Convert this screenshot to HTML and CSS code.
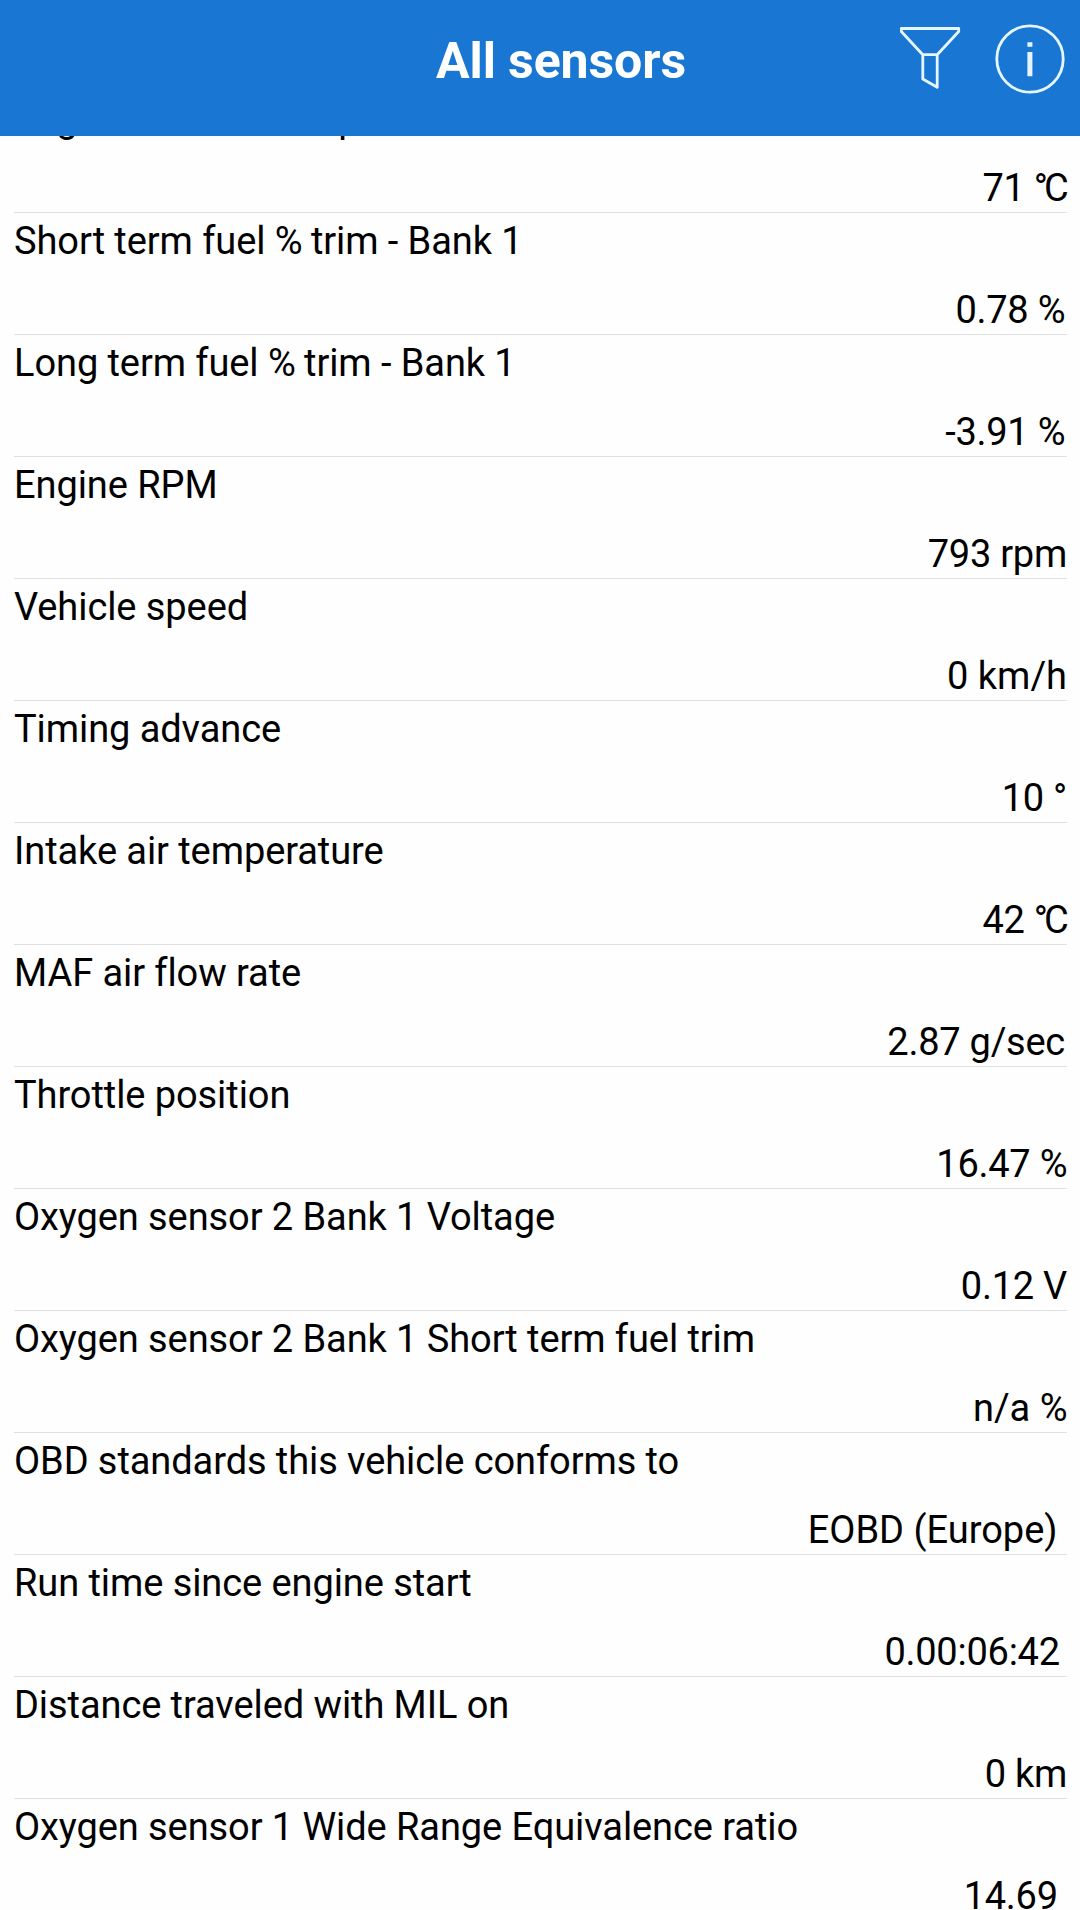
FILE: index.html
```html
<!DOCTYPE html>
<html lang="en">
<head>
<meta charset="utf-8">
<title>All sensors</title>
<link rel="stylesheet" href="styles.css">
</head>
<body>
<div class="screen">
<header class="bar">
<h1 class="title">All sensors</h1>
<div class="actions">
<svg class="filter" viewBox="0 0 62 66" width="62" height="66"><path d="M1.3 2.5H58.7V5.5L37.2 28.7H22.8L1.3 5.5ZM22.8 28.7V53L37.2 61.3V28.7"/></svg>
<svg class="info" viewBox="0 0 70 70" width="70" height="70"><circle cx="35" cy="35" r="33.2"/><path class="solid" d="M32.4 18.2h5v4.6h-5zM32.4 28h5v24.3h-5z"/></svg>
</div>
</header>
<main class="list">
<section class="row"><div class="name">Engine coolant temperature</div><div class="value celsius">71 <span class="deg">°</span>C</div></section>
<section class="row"><div class="name">Short term fuel <span class="pct">%</span> trim - Bank 1</div><div class="value inset">0.78 <span class="pct">%</span></div></section>
<section class="row"><div class="name">Long term fuel <span class="pct">%</span> trim - Bank 1</div><div class="value inset">-3.91 <span class="pct">%</span></div></section>
<section class="row"><div class="name">Engine RPM</div><div class="value">793 rpm</div></section>
<section class="row"><div class="name">Vehicle speed</div><div class="value plain">0 km/h</div></section>
<section class="row"><div class="name">Timing advance</div><div class="value">10 °</div></section>
<section class="row"><div class="name">Intake air temperature</div><div class="value celsius">42 <span class="deg">°</span>C</div></section>
<section class="row"><div class="name">MAF air flow rate</div><div class="value inset">2.87 g/sec</div></section>
<section class="row"><div class="name">Throttle position</div><div class="value">16.47 <span class="pct">%</span></div></section>
<section class="row"><div class="name">Oxygen sensor 2 Bank 1 Voltage</div><div class="value">0.12 V</div></section>
<section class="row"><div class="name">Oxygen sensor 2 Bank 1 Short term fuel trim</div><div class="value plain">n/a <span class="pct">%</span></div></section>
<section class="row"><div class="name">OBD standards this vehicle conforms to</div><div class="value plain">EOBD (Europe) </div></section>
<section class="row"><div class="name">Run time since engine start</div><div class="value time">0.00:06:42 </div></section>
<section class="row"><div class="name">Distance traveled with MIL on</div><div class="value">0 km</div></section>
<section class="row"><div class="name">Oxygen sensor 1 Wide Range Equivalence ratio</div><div class="value">14.69 </div></section>
</main>
</div>
</body>
</html>
```
FILE: styles.css
```css
body {
  margin: 0;
  background: #fefefe;
  color: #000;
  font-family: Roboto, "Noto Sans", sans-serif;
}
.screen {
  display: flex;
  flex-direction: column;
  width: 1080px;
  height: 1910px;
  overflow: hidden;
}
.bar {
  flex: none;
  display: grid;
  grid-template-columns: 1fr 250px 1fr;
  align-items: start;
  box-sizing: border-box;
  height: 136px;
  padding-left: 42px;
  background: #1976d3;
}
.title {
  grid-column: 2;
  margin: 31px 0 0;
  color: #fff;
  font-size: 50px;
  font-weight: 700;
  line-height: 60px;
  letter-spacing: -0.1px;
  text-align: center;
  white-space: nowrap;
}
.actions {
  display: flex;
  justify-content: flex-end;
  gap: 33px;
  padding: 23.5px 15px 0 0;
}
.actions svg {
  fill: none;
  stroke: #e6f6ff;
  stroke-width: 2.8;
  stroke-linejoin: round;
}
.actions .filter {
  margin-top: 2px;
}
.actions .solid {
  fill: #e6f6ff;
  stroke: none;
}
.list {
  flex: 1;
  min-height: 0;
  overflow: hidden;
  padding: 0 13px 0 14px;
}
.row {
  display: flex;
  flex-direction: column;
  justify-content: space-between;
  box-sizing: border-box;
  height: 122px;
  padding: 5px 0 1px;
  border-bottom: 1px solid #e0e0e0;
  font-size: 38px;
  line-height: 46px;
}
.row:first-child {
  margin-top: -45px;
}
.name,
.value {
  white-space: pre;
}
.name {
  letter-spacing: -0.08px;
}
.value {
  text-align: right;
  letter-spacing: -0.25px;
}
.value.plain {
  letter-spacing: 0;
}
.value.inset {
  padding-right: 2px;
}
.value.celsius {
  margin-right: -1.5px;
}
.value.time {
  margin-right: -2px;
}
.deg {
  letter-spacing: -4px;
}
.pct {
  letter-spacing: -1px;
}
.value .pct {
  letter-spacing: -0.5px;
}
```
